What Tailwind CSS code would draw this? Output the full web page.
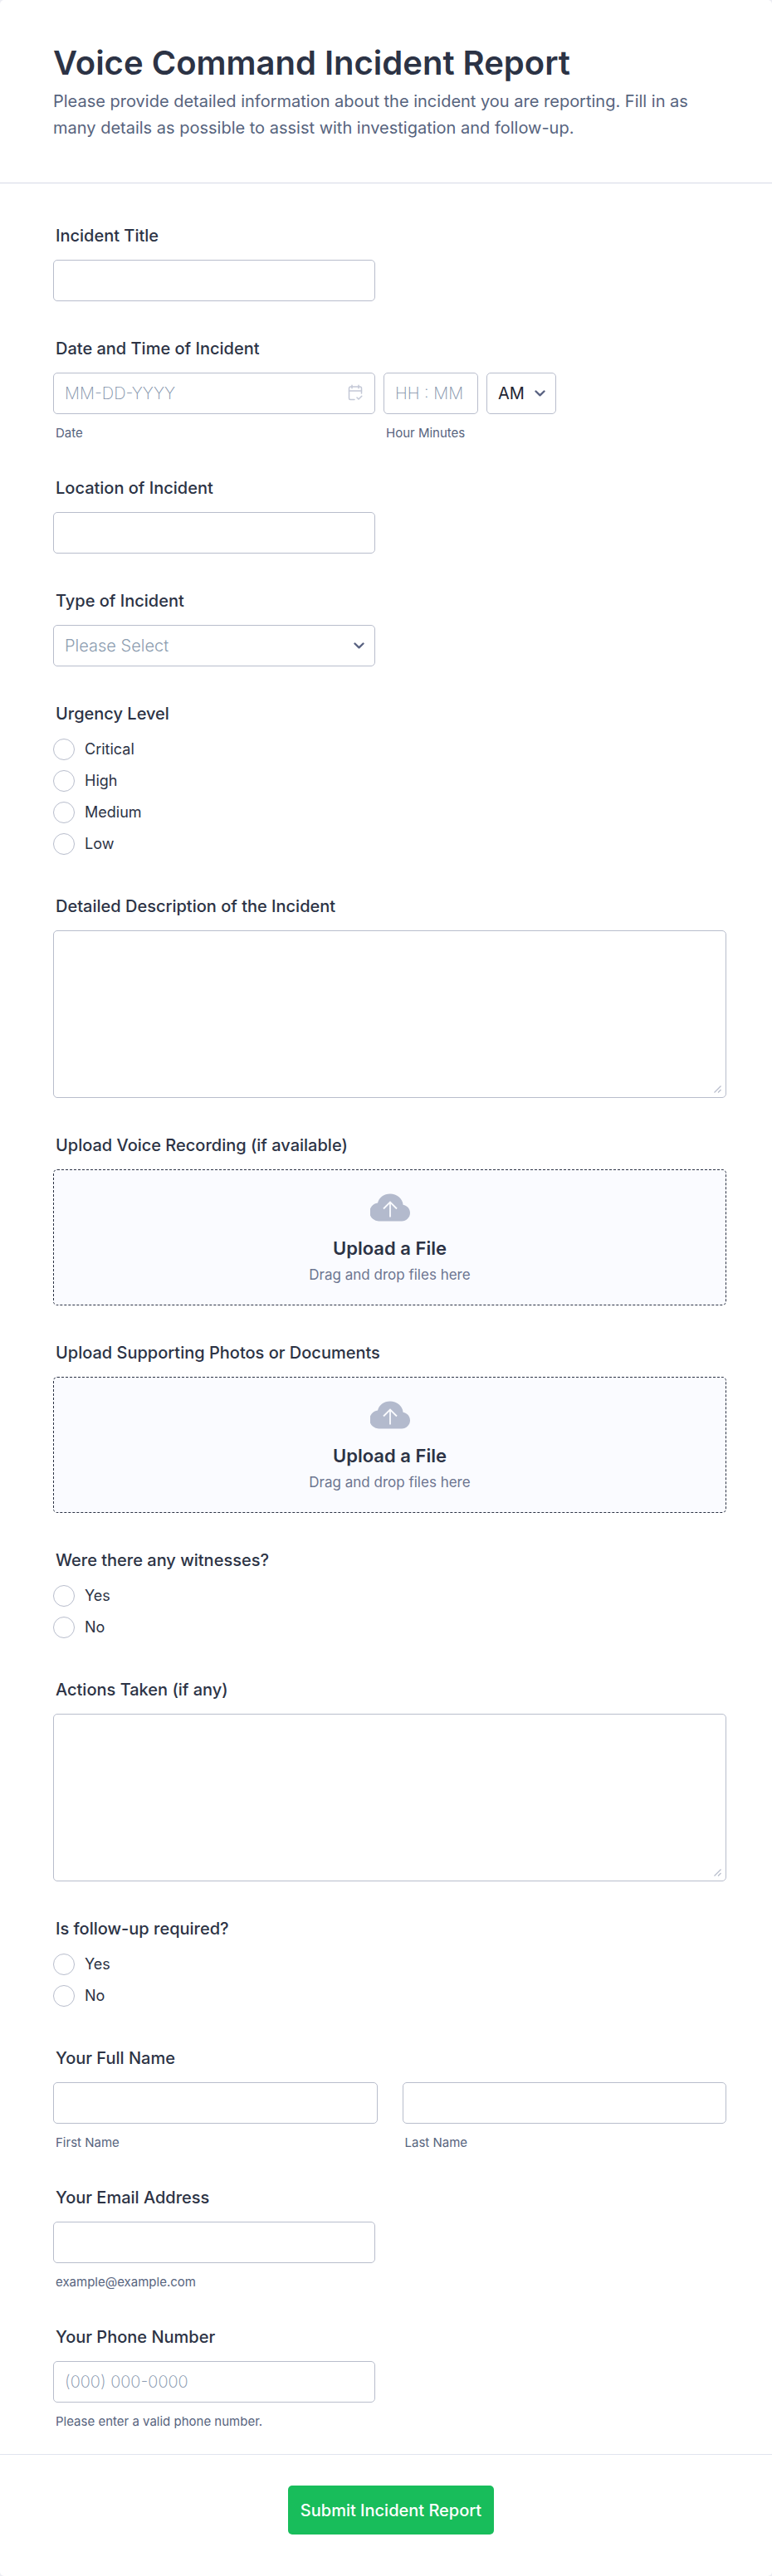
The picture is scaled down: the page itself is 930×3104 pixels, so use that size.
<!DOCTYPE html>
<html lang="en">
<head>
    <meta charset="UTF-8">
    <meta name="viewport" content="width=device-width, initial-scale=1.0">
    <title>Voice Command Incident Report</title>
    <script src="https://cdn.jsdelivr.net/npm/@tailwindcss/browser@4"></script>
</head>
<body class="bg-[#ecedf3] font-['Inter',sans-serif] text-[#2c3345]">

    <form class="bg-white rounded-[5px] overflow-hidden">

        <!-- Header -->
        <header class="pt-[52px] pb-[50px] pl-16 pr-[55px] border-b border-[#d6d9e6]">
            <h1 class="text-[40px] leading-[48px] font-semibold">Voice Command Incident Report</h1>
            <p class="mt-[6px] text-[20px] leading-[32px] text-[#57647e]">Please provide detailed information about the incident you are reporting. Fill in as many details as possible to assist with investigation and follow-up.</p>
        </header>

        <!-- Fields -->
        <div class="flex flex-col gap-[45px] pt-[51px] pb-[30px] pl-16 pr-[55px]">

            <div>
                <label for="title" class="block mb-4 pl-[3px] text-[20px] leading-[25px] font-medium">Incident Title</label>
                <input type="text" id="title" class="block w-full max-w-[388px] h-[50px] px-[13px] text-[20px] border border-[#b8bdcc] rounded-[5px]">
            </div>

            <div role="group" aria-labelledby="when-label">
                <div id="when-label" class="mb-4 pl-[3px] text-[20px] leading-[25px] font-medium">Date and Time of Incident</div>
                <div class="flex gap-[10px]">
                    <div class="w-[388px]">
                        <div class="relative">
                            <input type="text" id="date" placeholder="MM-DD-YYYY" class="block w-full h-[50px] px-[13px] text-[20px] font-extralight placeholder:text-[#7e90a8] border border-[#b8bdcc] rounded-[5px]">
                            <svg class="absolute right-[14px] top-[14px] w-[20px] h-[20px]" viewBox="0 0 20 20" fill="none" stroke="#c3c8d6" stroke-width="1.5" stroke-linecap="round" stroke-linejoin="round">
                                <path d="M17.5 11V5a2 2 0 0 0-2-2h-11a2 2 0 0 0-2 2v12a1.5 1.5 0 0 0 1.5 1.5h5"/>
                                <path d="M2.5 8h15M6 1.2v3.6M14 1.2v3.6M12 16l2 2 3.8-3.8"/>
                            </svg>
                        </div>
                        <label for="date" class="block mt-[14px] pl-[3px] text-[15px] leading-[18px] text-[#57647e]">Date</label>
                    </div>
                    <div class="w-[114px]">
                        <input type="text" id="time" placeholder="HH : MM" class="block w-full h-[50px] px-[13px] text-[20px] font-extralight placeholder:text-[#7e90a8] border border-[#b8bdcc] rounded-[5px]">
                        <label for="time" class="block mt-[14px] pl-[3px] text-[15px] leading-[18px] text-[#57647e]">Hour Minutes</label>
                    </div>
                    <div class="relative w-[84px] h-[50px]">
                        <select aria-label="AM or PM" class="block appearance-none w-full h-full px-[13px] text-[20px] text-[#222533] border border-[#b8bdcc] rounded-[5px]">
                            <option>AM</option>
                            <option>PM</option>
                        </select>
                        <svg class="absolute right-[13px] top-[21px] w-[13px] h-[8px] pointer-events-none" viewBox="0 0 13 8" fill="none" stroke="#5a6382" stroke-width="2.4" stroke-linecap="round" stroke-linejoin="round"><path d="M1.5 1.5l5 4.8 5-4.8"/></svg>
                    </div>
                </div>
            </div>

            <div>
                <label for="location" class="block mb-4 pl-[3px] text-[20px] leading-[25px] font-medium">Location of Incident</label>
                <input type="text" id="location" class="block w-full max-w-[388px] h-[50px] px-[13px] text-[20px] border border-[#b8bdcc] rounded-[5px]">
            </div>

            <div>
                <label for="type" class="block mb-4 pl-[3px] text-[20px] leading-[25px] font-medium">Type of Incident</label>
                <div class="relative w-full max-w-[388px]">
                    <select id="type" class="block appearance-none w-full h-[50px] px-[13px] text-[20px] font-light text-[#8d9db0] border border-[#b8bdcc] rounded-[5px]">
                        <option>Please Select</option>
                    </select>
                    <svg class="absolute right-[13px] top-[21px] w-[13px] h-[8px] pointer-events-none" viewBox="0 0 13 8" fill="none" stroke="#5a6382" stroke-width="2.4" stroke-linecap="round" stroke-linejoin="round"><path d="M1.5 1.5l5 4.8 5-4.8"/></svg>
                </div>
            </div>

            <fieldset class="pb-[5px]">
                <legend class="mb-[17px] pl-[3px] text-[20px] leading-[25px] font-medium">Urgency Level</legend>
                <div class="flex flex-col items-start gap-3 text-[18px] leading-[26px]">
                    <label class="flex items-center gap-3"><input type="radio" name="urgency" class="appearance-none w-[26px] h-[26px] rounded-full border border-[#b8bdcc] checked:border-8 checked:border-blue-600">Critical</label>
                    <label class="flex items-center gap-3"><input type="radio" name="urgency" class="appearance-none w-[26px] h-[26px] rounded-full border border-[#b8bdcc] checked:border-8 checked:border-blue-600">High</label>
                    <label class="flex items-center gap-3"><input type="radio" name="urgency" class="appearance-none w-[26px] h-[26px] rounded-full border border-[#b8bdcc] checked:border-8 checked:border-blue-600">Medium</label>
                    <label class="flex items-center gap-3"><input type="radio" name="urgency" class="appearance-none w-[26px] h-[26px] rounded-full border border-[#b8bdcc] checked:border-8 checked:border-blue-600">Low</label>
                </div>
            </fieldset>

            <div>
                <label for="description" class="block mb-4 pl-[3px] text-[20px] leading-[25px] font-medium">Detailed Description of the Incident</label>
                <div class="relative">
                    <textarea id="description" class="block resize-none w-full h-[202px] p-[13px] text-[20px] border border-[#b8bdcc] rounded-[5px]"></textarea>
                    <svg class="absolute right-[6px] bottom-[6px] w-[9px] h-[9px]" viewBox="0 0 9 9" stroke="#b8bdcc" stroke-width="1.2"><path d="M.5 8.5l8-8M5 8.5L8.5 5"/></svg>
                </div>
            </div>

            <div role="group" aria-labelledby="voice-label">
                <div id="voice-label" class="mb-4 pl-[3px] text-[20px] leading-[25px] font-medium">Upload Voice Recording (if available)</div>
                <label class="relative flex flex-col items-center h-[164px] pt-[28px] bg-[#fafbff] border border-dashed border-[#2c3345] rounded-[5px] cursor-pointer">
                    <input type="file" class="sr-only">
                    <svg class="w-[48px] h-[34px]" viewBox="0 0 48 34" fill="none">
                        <path d="M11 33.5A11 11 0 0 1 9 11.6C10.5 5 16.5.5 24 .5c8 0 15 5.5 15.6 13.2C44.5 14.5 48 18.5 48 23.5c0 5.5-4.5 10-10 10z" fill="#b3bacd"/>
                        <path d="M24 28.5V10.5M16 18.5l8-8 8 8" stroke="#fafbff" stroke-width="1.8"/>
                    </svg>
                    <span class="mt-[18px] text-[22px] leading-[28px] font-semibold">Upload a File</span>
                    <span class="mt-[6px] text-[17px] leading-[24px] text-[#6c7590]">Drag and drop files here</span>
                </label>
            </div>

            <div role="group" aria-labelledby="photos-label">
                <div id="photos-label" class="mb-4 pl-[3px] text-[20px] leading-[25px] font-medium">Upload Supporting Photos or Documents</div>
                <label class="relative flex flex-col items-center h-[164px] pt-[28px] bg-[#fafbff] border border-dashed border-[#2c3345] rounded-[5px] cursor-pointer">
                    <input type="file" class="sr-only">
                    <svg class="w-[48px] h-[34px]" viewBox="0 0 48 34" fill="none">
                        <path d="M11 33.5A11 11 0 0 1 9 11.6C10.5 5 16.5.5 24 .5c8 0 15 5.5 15.6 13.2C44.5 14.5 48 18.5 48 23.5c0 5.5-4.5 10-10 10z" fill="#b3bacd"/>
                        <path d="M24 28.5V10.5M16 18.5l8-8 8 8" stroke="#fafbff" stroke-width="1.8"/>
                    </svg>
                    <span class="mt-[18px] text-[22px] leading-[28px] font-semibold">Upload a File</span>
                    <span class="mt-[6px] text-[17px] leading-[24px] text-[#6c7590]">Drag and drop files here</span>
                </label>
            </div>

            <fieldset class="pb-[5px]">
                <legend class="mb-[17px] pl-[3px] text-[20px] leading-[25px] font-medium">Were there any witnesses?</legend>
                <div class="flex flex-col items-start gap-3 text-[18px] leading-[26px]">
                    <label class="flex items-center gap-3"><input type="radio" name="witnesses" class="appearance-none w-[26px] h-[26px] rounded-full border border-[#b8bdcc] checked:border-8 checked:border-blue-600">Yes</label>
                    <label class="flex items-center gap-3"><input type="radio" name="witnesses" class="appearance-none w-[26px] h-[26px] rounded-full border border-[#b8bdcc] checked:border-8 checked:border-blue-600">No</label>
                </div>
            </fieldset>

            <div>
                <label for="actions" class="block mb-4 pl-[3px] text-[20px] leading-[25px] font-medium">Actions Taken (if any)</label>
                <div class="relative">
                    <textarea id="actions" class="block resize-none w-full h-[202px] p-[13px] text-[20px] border border-[#b8bdcc] rounded-[5px]"></textarea>
                    <svg class="absolute right-[6px] bottom-[6px] w-[9px] h-[9px]" viewBox="0 0 9 9" stroke="#b8bdcc" stroke-width="1.2"><path d="M.5 8.5l8-8M5 8.5L8.5 5"/></svg>
                </div>
            </div>

            <fieldset class="pb-[5px]">
                <legend class="mb-[17px] pl-[3px] text-[20px] leading-[25px] font-medium">Is follow-up required?</legend>
                <div class="flex flex-col items-start gap-3 text-[18px] leading-[26px]">
                    <label class="flex items-center gap-3"><input type="radio" name="followup" class="appearance-none w-[26px] h-[26px] rounded-full border border-[#b8bdcc] checked:border-8 checked:border-blue-600">Yes</label>
                    <label class="flex items-center gap-3"><input type="radio" name="followup" class="appearance-none w-[26px] h-[26px] rounded-full border border-[#b8bdcc] checked:border-8 checked:border-blue-600">No</label>
                </div>
            </fieldset>

            <div role="group" aria-labelledby="name-label">
                <div id="name-label" class="mb-4 pl-[3px] text-[20px] leading-[25px] font-medium">Your Full Name</div>
                <div class="grid grid-cols-2 gap-[30px]">
                    <div>
                        <input type="text" id="first" class="block w-full h-[50px] px-[13px] text-[20px] border border-[#b8bdcc] rounded-[5px]">
                        <label for="first" class="block mt-[14px] pl-[3px] text-[15px] leading-[18px] text-[#57647e]">First Name</label>
                    </div>
                    <div>
                        <input type="text" id="last" class="block w-full h-[50px] px-[13px] text-[20px] border border-[#b8bdcc] rounded-[5px]">
                        <label for="last" class="block mt-[14px] pl-[3px] text-[15px] leading-[18px] text-[#57647e]">Last Name</label>
                    </div>
                </div>
            </div>

            <div>
                <label for="email" class="block mb-4 pl-[3px] text-[20px] leading-[25px] font-medium">Your Email Address</label>
                <input type="email" id="email" class="block w-full max-w-[388px] h-[50px] px-[13px] text-[20px] border border-[#b8bdcc] rounded-[5px]">
                <p class="mt-[14px] pl-[3px] text-[15px] leading-[18px] text-[#57647e]">example@example.com</p>
            </div>

            <div>
                <label for="phone" class="block mb-4 pl-[3px] text-[20px] leading-[25px] font-medium">Your Phone Number</label>
                <input type="tel" id="phone" placeholder="(000) 000-0000" class="block w-full max-w-[388px] h-[50px] px-[13px] text-[20px] font-extralight placeholder:text-[#7e90a8] border border-[#b8bdcc] rounded-[5px]">
                <p class="mt-[14px] pl-[3px] text-[15px] leading-[18px] text-[#57647e]">Please enter a valid phone number.</p>
            </div>
        </div>

        <!-- Submit -->
        <div class="flex justify-center pt-[37px] pb-[50px] pl-16 pr-[52px] border-t border-[#e1e4ef]">
            <button type="submit" class="h-[59px] px-[15px] text-[20px] font-medium text-white bg-[#18bd5b] rounded-[5px]">Submit Incident Report</button>
        </div>
    </form>

</body>
</html>
